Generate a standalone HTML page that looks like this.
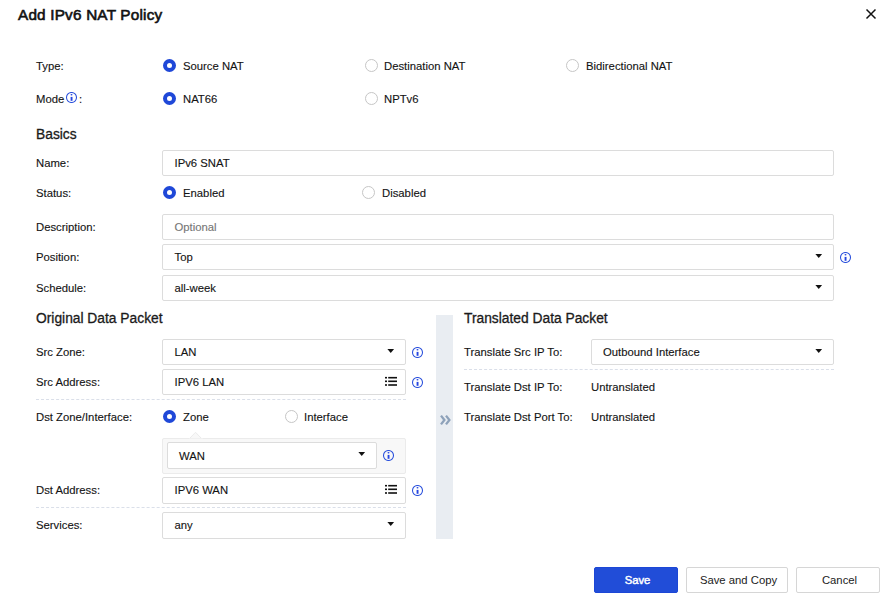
<!DOCTYPE html>
<html><head><meta charset="utf-8">
<style>
*{box-sizing:border-box;margin:0;padding:0}
html,body{width:892px;height:598px;overflow:hidden;background:#fff}
body{position:relative;font-family:"Liberation Sans",sans-serif;font-size:11.3px;color:#141414}
.a{position:absolute;white-space:nowrap}
.t{line-height:14px;-webkit-text-stroke:0.12px currentColor}
.title{left:18px;top:6px;font-size:15.3px;color:#111;line-height:18px;-webkit-text-stroke:0.6px #111;letter-spacing:0.2px}
.h{font-size:13.8px;color:#1a1a1a;line-height:16px;-webkit-text-stroke:0.3px #1a1a1a}
.lbl{left:36px}
.radio{width:13px;height:13px;border-radius:50%;border:1.2px solid #c6c6c6;background:#fff}
.radio.on{border:4px solid #1f48d8}
.box{border:1px solid #dcdcdc;border-radius:2px;background:#fff}
.caret{width:6.7px;height:4px;background:#111;clip-path:polygon(0 0,100% 0,50% 100%)}
.info{width:11px;height:11px}
.dash{height:0;border-top:1px dashed #dadfe9}
.btn{border:1px solid #d6d6d6;border-radius:2px;background:#fff;text-align:center;line-height:24px;color:#222;padding-left:3px}
</style></head><body>

<div class="a title">Add IPv6 NAT Policy</div>
<svg class="a" style="left:865px;top:8px" width="12" height="12" viewBox="0 0 12 12"><path d="M1.5 1.5L10.5 10.5M10.5 1.5L1.5 10.5" stroke="#111" stroke-width="1.45" fill="none"/></svg>

<!-- Type -->
<div class="a t lbl" style="top:59px">Type:</div>
<div class="a radio on" style="left:163px;top:59px"></div>
<div class="a t" style="left:183px;top:59px">Source NAT</div>
<div class="a radio" style="left:365px;top:59px"></div>
<div class="a t" style="left:384px;top:59px">Destination NAT</div>
<div class="a radio" style="left:566px;top:59px"></div>
<div class="a t" style="left:586px;top:59px">Bidirectional NAT</div>

<!-- Mode -->
<div class="a t lbl" style="top:92px">Mode</div>
<svg class="a info" style="left:66px;top:92px" viewBox="0 0 11 11"><circle cx="5.5" cy="5.5" r="5" fill="none" stroke="#2a50dc" stroke-width="1.05"/><ellipse cx="5.5" cy="2.7" rx="1" ry="0.7" fill="#2545e0"/><rect x="4.6" y="4.9" width="1.9" height="3.9" fill="#2545e0"/></svg>
<div class="a t" style="left:79px;top:92px">:</div>
<div class="a radio on" style="left:163px;top:92px"></div>
<div class="a t" style="left:183px;top:92px">NAT66</div>
<div class="a radio" style="left:365px;top:92px"></div>
<div class="a t" style="left:384px;top:92px">NPTv6</div>

<div class="a h lbl" style="top:127px">Basics</div>

<!-- Name -->
<div class="a t lbl" style="top:156px">Name:</div>
<div class="a box" style="left:162px;top:150px;width:672px;height:26px"></div>
<div class="a t" style="left:174.5px;top:156px">IPv6 SNAT</div>

<!-- Status -->
<div class="a t lbl" style="top:186px">Status:</div>
<div class="a radio on" style="left:163px;top:186px"></div>
<div class="a t" style="left:183px;top:186px">Enabled</div>
<div class="a radio" style="left:362px;top:186px"></div>
<div class="a t" style="left:382px;top:186px">Disabled</div>

<!-- Description -->
<div class="a t lbl" style="top:220px">Description:</div>
<div class="a box" style="left:162px;top:214px;width:672px;height:26px"></div>
<div class="a t" style="left:174.5px;top:220px;color:#767676">Optional</div>

<!-- Position -->
<div class="a t lbl" style="top:250px">Position:</div>
<div class="a box" style="left:162px;top:244px;width:672px;height:26px"></div>
<div class="a t" style="left:174.5px;top:250px">Top</div>
<div class="a caret" style="left:815.4px;top:254px"></div>
<svg class="a info" style="left:840px;top:252px" viewBox="0 0 11 11"><circle cx="5.5" cy="5.5" r="5" fill="none" stroke="#2a50dc" stroke-width="1.05"/><ellipse cx="5.5" cy="2.7" rx="1" ry="0.7" fill="#2545e0"/><rect x="4.6" y="4.9" width="1.9" height="3.9" fill="#2545e0"/></svg>

<!-- Schedule -->
<div class="a t lbl" style="top:281px">Schedule:</div>
<div class="a box" style="left:162px;top:275px;width:672px;height:26px"></div>
<div class="a t" style="left:174.5px;top:281px">all-week</div>
<div class="a caret" style="left:815.4px;top:285px"></div>

<!-- Original -->
<div class="a h lbl" style="top:311px">Original Data Packet</div>

<div class="a t lbl" style="top:345px">Src Zone:</div>
<div class="a box" style="left:162px;top:339px;width:244px;height:26px"></div>
<div class="a t" style="left:174.5px;top:345px">LAN</div>
<div class="a caret" style="left:387.4px;top:349px"></div>
<svg class="a info" style="left:412px;top:347px" viewBox="0 0 11 11"><circle cx="5.5" cy="5.5" r="5" fill="none" stroke="#2a50dc" stroke-width="1.05"/><ellipse cx="5.5" cy="2.7" rx="1" ry="0.7" fill="#2545e0"/><rect x="4.6" y="4.9" width="1.9" height="3.9" fill="#2545e0"/></svg>

<div class="a t lbl" style="top:375px">Src Address:</div>
<div class="a box" style="left:162px;top:369px;width:244px;height:26px"></div>
<div class="a t" style="left:174.5px;top:375px">IPV6 LAN</div>
<svg class="a" style="left:385px;top:376px" width="12" height="11" viewBox="0 0 12 11"><g fill="#111"><rect x="0" y="0.9" width="2" height="1.6"/><rect x="3.2" y="0.9" width="8.8" height="1.6"/><rect x="0" y="4.5" width="2" height="1.6"/><rect x="3.2" y="4.5" width="8.8" height="1.6"/><rect x="0" y="8.2" width="2" height="1.6"/><rect x="3.2" y="8.2" width="8.8" height="1.6"/></g></svg>
<svg class="a info" style="left:412px;top:377px" viewBox="0 0 11 11"><circle cx="5.5" cy="5.5" r="5" fill="none" stroke="#2a50dc" stroke-width="1.05"/><ellipse cx="5.5" cy="2.7" rx="1" ry="0.7" fill="#2545e0"/><rect x="4.6" y="4.9" width="1.9" height="3.9" fill="#2545e0"/></svg>

<div class="a dash" style="left:36px;top:399px;width:370px"></div>

<div class="a t lbl" style="top:410px">Dst Zone/Interface:</div>
<div class="a radio on" style="left:163px;top:410px"></div>
<div class="a t" style="left:183px;top:410px">Zone</div>
<div class="a radio" style="left:285px;top:410px"></div>
<div class="a t" style="left:304px;top:410px">Interface</div>

<div class="a" style="left:162px;top:438px;width:244px;height:36px;background:#f8f8f8;border:1px solid #ebebeb;border-radius:2px"></div>
<svg class="a" style="left:189px;top:431px" width="14" height="9" viewBox="0 0 14 9"><polygon points="0.5,7.5 6.5,1.3 12.5,7.5" fill="#f8f8f8" stroke="#ebebeb" stroke-width="1"/><rect x="0" y="7.6" width="14" height="1.4" fill="#f8f8f8"/></svg>
<div class="a box" style="left:167px;top:442px;width:210px;height:27px"></div>
<div class="a t" style="left:179px;top:449px">WAN</div>
<div class="a caret" style="left:358.4px;top:452px"></div>
<svg class="a info" style="left:383px;top:450px" viewBox="0 0 11 11"><circle cx="5.5" cy="5.5" r="5" fill="none" stroke="#2a50dc" stroke-width="1.05"/><ellipse cx="5.5" cy="2.7" rx="1" ry="0.7" fill="#2545e0"/><rect x="4.6" y="4.9" width="1.9" height="3.9" fill="#2545e0"/></svg>

<div class="a t lbl" style="top:483px">Dst Address:</div>
<div class="a box" style="left:162px;top:477px;width:244px;height:27px"></div>
<div class="a t" style="left:174.5px;top:483px">IPV6 WAN</div>
<svg class="a" style="left:385px;top:484px" width="12" height="11" viewBox="0 0 12 11"><g fill="#111"><rect x="0" y="0.9" width="2" height="1.6"/><rect x="3.2" y="0.9" width="8.8" height="1.6"/><rect x="0" y="4.5" width="2" height="1.6"/><rect x="3.2" y="4.5" width="8.8" height="1.6"/><rect x="0" y="8.2" width="2" height="1.6"/><rect x="3.2" y="8.2" width="8.8" height="1.6"/></g></svg>
<svg class="a info" style="left:412px;top:485px" viewBox="0 0 11 11"><circle cx="5.5" cy="5.5" r="5" fill="none" stroke="#2a50dc" stroke-width="1.05"/><ellipse cx="5.5" cy="2.7" rx="1" ry="0.7" fill="#2545e0"/><rect x="4.6" y="4.9" width="1.9" height="3.9" fill="#2545e0"/></svg>

<div class="a dash" style="left:36px;top:507px;width:370px"></div>

<div class="a t lbl" style="top:518px">Services:</div>
<div class="a box" style="left:162px;top:512px;width:244px;height:27px"></div>
<div class="a t" style="left:174.5px;top:518px">any</div>
<div class="a caret" style="left:387.4px;top:522px"></div>

<!-- divider bar -->
<div class="a" style="left:436px;top:315px;width:17px;height:224px;background:#e9edf2"></div>
<svg class="a" style="left:436px;top:412px" width="17" height="16" viewBox="0 0 17 16"><g fill="none" stroke="#8ea2ba" stroke-width="2.3" stroke-linejoin="miter"><polyline points="5,3.6 8.4,8 5,12.4"/><polyline points="10,3.6 13.4,8 10,12.4"/></g></svg>

<!-- Translated -->
<div class="a h" style="left:464px;top:311px">Translated Data Packet</div>
<div class="a t" style="left:464px;top:345px">Translate Src IP To:</div>
<div class="a box" style="left:591px;top:339px;width:243px;height:26px"></div>
<div class="a t" style="left:603px;top:345px">Outbound Interface</div>
<div class="a caret" style="left:815.4px;top:349px"></div>
<div class="a dash" style="left:464px;top:369px;width:370px"></div>
<div class="a t" style="left:464px;top:380px">Translate Dst IP To:</div>
<div class="a t" style="left:591px;top:380px">Untranslated</div>
<div class="a t" style="left:464px;top:410px">Translate Dst Port To:</div>
<div class="a t" style="left:591px;top:410px">Untranslated</div>

<!-- Buttons -->
<div class="a btn" style="left:594px;top:567px;width:84px;height:26px;background:#214dd8;border-color:#1c47d6;color:#fff;-webkit-text-stroke:0.45px #fff">Save</div>
<div class="a btn" style="left:686px;top:567px;width:102px;height:26px">Save and Copy</div>
<div class="a btn" style="left:796px;top:567px;width:84px;height:26px">Cancel</div>

</body></html>
